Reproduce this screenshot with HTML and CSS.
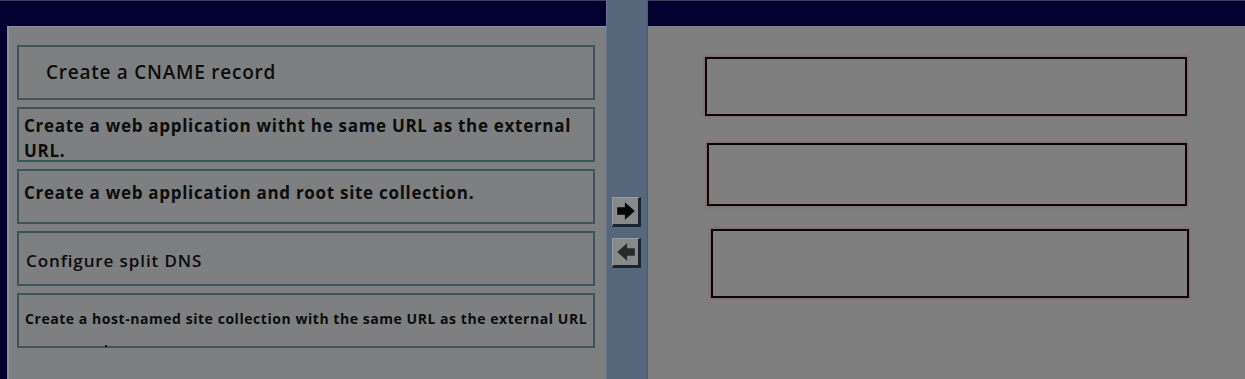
FILE: index.html
```html
<!DOCTYPE html>
<html>
<head>
<meta charset="utf-8">
<link rel="stylesheet" href="styles.css">
</head>
<body>
<div class="screen">
  <div class="left-col">
    <div class="topbar"></div>
    <div class="left-panel">
      <div class="item item-cname"><span>Create a CNAME record</span></div>
      <div class="item item-two">Create a web application witht he same URL as the external URL.</div>
      <div class="item item-top">Create a web application and root site collection.</div>
      <div class="item item-dns">Configure split DNS</div>
      <div class="item item-small">Create a host-named site collection with the same URL as the external URL<span class="dot"></span></div>
    </div>
  </div>
  <div class="strip">
    <div class="btn">
      <svg width="22" height="22" viewBox="0 0 20 20"><path d="M2 6.5 H9 V2 L18 10 L9 18 V13.5 H2 Z" fill="#050505"/></svg>
    </div>
    <div class="btn">
      <svg width="22" height="22" viewBox="0 0 20 20"><path d="M18 6.5 H11 V2 L2 10 L11 18 V13.5 H18 Z" fill="#2a2a2a"/></svg>
    </div>
  </div>
  <div class="right-col">
    <div class="topbar"></div>
    <div class="right-panel">
      <div class="slot slot1"></div>
      <div class="slot slot2"></div>
      <div class="slot slot3"></div>
    </div>
  </div>
</div>
</body>
</html>
```
FILE: styles.css
```css
html, body {
  margin: 0;
  padding: 0;
  background: #7f7f7f;
}
.screen {
  width: 1245px;
  height: 379px;
  display: grid;
  grid-template-columns: 606px 42px 1fr;
  overflow: hidden;
  font-family: "Open Sans", "Lato", sans-serif;
  color: #0c0c0c;
}
.topbar {
  height: 26px;
  background: #01002e;
  border-top: 1px solid #3a3f55;
  box-sizing: border-box;
}
.left-col {
  display: flex;
  flex-direction: column;
  background: #01002e;
}
.left-panel {
  flex: 1;
  margin-left: 7px;
  background: #7e7f80;
  border-left: 2px solid #8b9093;
  border-top: 1px solid #8b9093;
  padding: 18px 11px 0 8px;
  display: flex;
  flex-direction: column;
  gap: 7px;
}
.item {
  height: 55px;
  box-sizing: border-box;
  border: 2px solid #3b5558;
  background: #7d7f80;
  font-weight: 700;
  font-size: 17px;
  line-height: 25px;
  padding: 0 0 0 5px;
  display: flex;
  align-items: center;
  position: relative;
  letter-spacing: 0.7px;
}
.item-cname {
  font-size: 19px;
  font-weight: 600;
  padding-left: 27px;
  letter-spacing: 0.75px;
}
.item-two {
  align-items: flex-start;
  padding-top: 4px;
}
.item-top {
  align-items: flex-start;
  padding-top: 9px;
}
.item-dns {
  font-weight: 600;
  padding-left: 7px;
  padding-top: 3px;
  letter-spacing: 0.9px;
}
.item-small {
  font-size: 14px;
  align-items: flex-start;
  padding-top: 11px;
  padding-left: 6px;
  letter-spacing: 0.55px;
}
.dot {
  position: absolute;
  left: 86px;
  bottom: -1px;
  width: 2px;
  height: 2px;
  background: #111;
}
.strip {
  background: #55677a;
  border-left: 1px solid #66778a;
  border-right: 1px solid #4a5a6b;
  padding-top: 197px;
  padding-left: 5px;
  display: flex;
  flex-direction: column;
  gap: 11px;
}
.btn {
  width: 29px;
  height: 30px;
  box-sizing: border-box;
  background: #87898a;
  border-right: 3px solid #1c2430;
  border-bottom: 3px solid #1c2430;
  border-top: 1px solid #9a9d9f;
  border-left: 1px solid #9a9d9f;
  display: flex;
  align-items: center;
  justify-content: center;
}
.right-col {
  display: flex;
  flex-direction: column;
}
.right-panel {
  flex: 1;
  background: #7f7f7f;
  position: relative;
  display: flex;
  flex-direction: column;
}
.slot {
  border: 2px solid #0a0204;
  box-shadow: 0 0 2px 1px rgba(140, 90, 95, 0.7);
  box-sizing: border-box;
  background: #7f7f80;
}
.slot1 {
  margin: 31px 0 0 57px;
  width: 482px;
  height: 59px;
}
.slot2 {
  margin: 27px 0 0 59px;
  width: 480px;
  height: 63px;
}
.slot3 {
  margin: 23px 0 0 63px;
  width: 478px;
  height: 69px;
}
```
